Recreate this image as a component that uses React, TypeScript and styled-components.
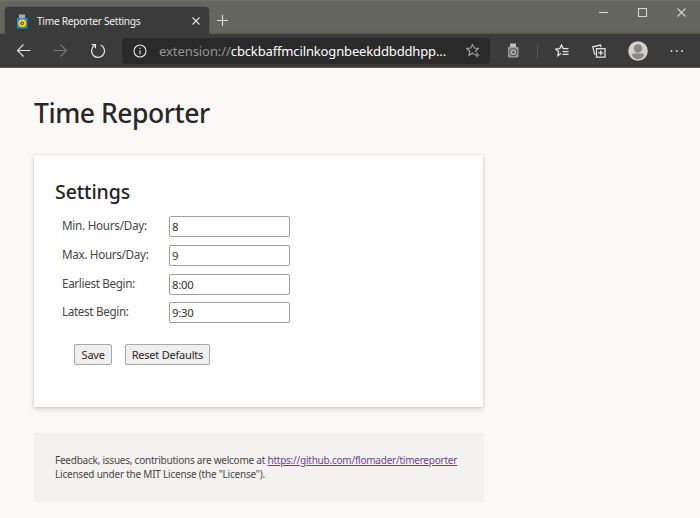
import React, { useState } from "react";
import styled, { createGlobalStyle } from "styled-components";

const GlobalStyle = createGlobalStyle`
  * { box-sizing: border-box; }
  html, body { margin: 0; background: #faf9f8; }
  body { font-family: "Noto Sans", "Open Sans", sans-serif; color: #323130; overflow: hidden; }
`;

const Window = styled.div`
  width: 700px;
  height: 518px;
  display: flex;
  flex-direction: column;
  background: #faf9f8;
  overflow: hidden;
`;

const TitleBar = styled.header`
  height: 34px;
  flex: none;
  display: flex;
  align-items: flex-start;
  padding-left: 5px;
  background: linear-gradient(#73746c 0, #65665f 2px, #65665f 31px, #575852 34px);
`;

const Tab = styled.div`
  width: 203.5px;
  height: 27px;
  margin-top: 7px;
  padding: 1px 8px 0 11px;
  display: flex;
  align-items: center;
  border-radius: 4px 4px 0 0;
  background: #3b3b3b;
  box-shadow: 0 0 2px #44443f;
`;

const TabTitle = styled.span`
  flex: 1;
  margin-left: 9px;
  font-size: 10.2px;
  line-height: 14px;
  letter-spacing: -0.3px;
  white-space: nowrap;
  color: #f0f0f0;
`;

const Icon = styled.svg<{ $w: number; $h?: number; $color?: string }>`
  display: block;
  flex: none;
  width: ${(p) => p.$w}px;
  height: ${(p) => p.$h ?? p.$w}px;
  color: ${(p) => p.$color ?? "#e4e4e4"};
  fill: none;
  stroke: currentColor;
  stroke-width: 1.1;
`;

const NewTab = styled.div`
  margin: 14px 0 0 7.5px;
`;

const WindowControls = styled.div`
  margin-left: auto;
  padding: 7px 13px 0 0;
  display: flex;
  gap: 28px;
`;

const Toolbar = styled.nav`
  height: 34px;
  flex: none;
  display: flex;
  align-items: center;
  padding: 0 15px 0 16px;
  background: #3b3b3b;
  border-bottom: 1px solid #5b5b5b;
`;

const NavButtons = styled.div`
  width: 106px;
  display: flex;
  align-items: center;
  gap: 22px;
`;

const AddressBar = styled.div`
  width: 368px;
  height: 26px;
  padding: 0 10px 0 11px;
  display: flex;
  align-items: center;
  border-radius: 4px;
  background: #2a2a2a;
`;

const Url = styled.span`
  flex: 1;
  margin-left: 12px;
  padding-top: 1px;
  font-size: 13px;
  line-height: 18px;
  letter-spacing: -0.14px;
  white-space: nowrap;
  color: #fff;
`;

const Scheme = styled.span`
  letter-spacing: -0.07px;
  color: #969696;
`;

const Actions = styled.div`
  flex: 1;
  display: grid;
  grid-template-columns: 30px 18px 37px 35.5px 42.5px 14px;
  align-items: center;
  padding-left: 17px;
`;

const Divider = styled.i`
  width: 1px;
  height: 14px;
  background: #555;
`;

const Page = styled.main`
  padding: 26px 34px 0;
`;

const PageTitle = styled.h1`
  margin: 0;
  height: 61px;
  font-size: 26.5px;
  font-weight: 500;
  line-height: 38px;
  letter-spacing: -0.45px;
  white-space: nowrap;
  color: #292827;
`;

const Card = styled.section`
  width: 449px;
  height: 252px;
  padding: 22px 21px 0;
  background: #fff;
  box-shadow: 0 2px 5px rgba(0, 0, 0, 0.17), 0 0 2px rgba(0, 0, 0, 0.1);
`;

const CardTitle = styled.h2`
  margin: 0;
  height: 39px;
  padding-top: 1px;
  font-size: 19.5px;
  font-weight: 500;
  line-height: 28px;
  letter-spacing: -0.1px;
  white-space: nowrap;
  color: #252423;
`;

const Field = styled.label`
  height: 28.8px;
  padding-left: 7px;
  display: grid;
  grid-template-columns: 107px 122px;
  align-items: start;
`;

const Label = styled.span<{ $spacing: number }>`
  font-size: 11.7px;
  line-height: 18px;
  letter-spacing: ${(p) => p.$spacing}px;
  white-space: nowrap;
  color: #484644;
`;

const Input = styled.input`
  width: 121px;
  height: 21px;
  padding: 1px 2px;
  border: 1px solid #a0a0a0;
  border-radius: 2px;
  background: #fff;
  outline: none;
  font: 11.3px/16px "Noto Sans", sans-serif;
  letter-spacing: -0.25px;
  color: #323130;
`;

const Buttons = styled.div`
  display: flex;
  gap: 13px;
  margin: 13px 0 0 19.4px;
`;

const Button = styled.button<{ $width: number }>`
  width: ${(p) => p.$width}px;
  height: 21px;
  padding: 1px 0 0;
  border: 1px solid #a8a8a8;
  border-radius: 2px;
  background: #efefef;
  font: 11px/16px "Noto Sans", sans-serif;
  letter-spacing: -0.22px;
  white-space: nowrap;
  color: #292827;
`;

const Footer = styled.footer`
  width: 449.5px;
  height: 69px;
  margin-top: 26px;
  padding: 21px 21px 0;
  background: #f3f2f1;
  font-size: 10px;
  line-height: 13.6px;
  white-space: nowrap;
  color: #484644;
`;

const FooterLine = styled.p<{ $spacing: number }>`
  margin: 0;
  letter-spacing: ${(p) => p.$spacing}px;
`;

const Link = styled.a`
  color: #703d96;
  text-decoration: underline;
`;

const Watch = ({ color }: { color?: boolean }) => (
  <Icon $w={12} $h={15} viewBox="0 0 12 15" stroke="none">
    <g stroke="none">
      <rect x="3" y="0.5" width="6" height="5" fill={color ? "#a9a9a7" : "#bdbdbd"} />
      <rect x="1" y="4" width="10.5" height="10.5" rx="1" fill={color ? "#2688d8" : "#999"} />
      <circle cx="6.2" cy="9.2" r="3.9" fill={color ? "#f6cf20" : "#555"} />
      <circle cx="6.2" cy="9.2" r={color ? 1.8 : 2.9} fill={color ? "#57501d" : "#aaa"} />
      <circle cx="6.4" cy="9.2" r={color ? 0.8 : 1.2} fill={color ? "#f6cf20" : "#555"} />
    </g>
  </Icon>
);

const initialFields = [
  { label: "Min. Hours/Day:", value: "8", spacing: -0.27 },
  { label: "Max. Hours/Day:", value: "9", spacing: -0.33 },
  { label: "Earliest Begin:", value: "8:00", spacing: -0.35 },
  { label: "Latest Begin:", value: "9:30", spacing: -0.35 },
];

export default function App() {
  const [values, setValues] = useState(initialFields.map((f) => f.value));
  const update = (index: number, value: string) =>
    setValues((current) => current.map((v, i) => (i === index ? value : v)));

  return (
    <Window>
      <GlobalStyle />
      <TitleBar>
        <Tab>
          <Watch color />
          <TabTitle>Time Reporter Settings</TabTitle>
          <Icon $w={10} viewBox="0 0 10 10"><path d="M1.5 1.5l7 7M8.5 1.5l-7 7" /></Icon>
        </Tab>
        <NewTab>
          <Icon $w={13} viewBox="0 0 13 13"><path d="M6.5 1v11M1 6.5h11" /></Icon>
        </NewTab>
        <WindowControls>
          <Icon $w={11} viewBox="0 0 11 11" $color="#d3d3cf"><path d="M1 5.5h9" /></Icon>
          <Icon $w={11} viewBox="0 0 11 11" $color="#d3d3cf"><path d="M1.5 1.5h8v8h-8z" /></Icon>
          <Icon $w={11} viewBox="0 0 11 11" $color="#d3d3cf"><path d="M1.5 1.5l8 8M9.5 1.5l-8 8" /></Icon>
        </WindowControls>
      </TitleBar>

      <Toolbar>
        <NavButtons>
          <Icon $w={15} viewBox="0 0 15 15"><path d="M14.5 7.5H1.5M7.5 1.5l-6 6 6 6" /></Icon>
          <Icon $w={15} viewBox="0 0 15 15" $color="#777"><path d="M.5 7.5h13M7.5 1.5l6 6-6 6" /></Icon>
          <Icon $w={16} viewBox="0 0 16 16"><path d="M10.6 2a6.5 6.5 0 1 1-6.1.5M1.7 1.6h3.7v3.7" strokeWidth="1.25" /></Icon>
        </NavButtons>
        <AddressBar>
          <Icon $w={14} viewBox="0 0 14 14"><circle cx="7" cy="7" r="6" /><path d="M7 6.2v4M7 3.8v1.3" /></Icon>
          <Url><Scheme>extension://</Scheme>cbckbaffmcilnkognbeekddbddhpp...</Url>
          <Icon $w={14} viewBox="0 0 14 14" $color="#a5a5a5">
            <path d="M8.5 10.4l-2-1.2-3.6 2.1.8-4-3-2.8 4-.4L6.5.6l1.8 3.5 4 .4-2.8 2.8.2.9M11 8.5v5M8.5 11h5" />
          </Icon>
        </AddressBar>
        <Actions>
          <Watch />
          <Divider />
          <Icon $w={14} viewBox="0 0 14 14">
            <path d="M6 9.6l-3.2 2.1.8-4-2.8-2.6 4-.5L6.5 1l1.7 3.6h5.3M7.5 7.5h6M7.5 10.3h6" strokeWidth="1.25" />
          </Icon>
          <Icon $w={14} viewBox="0 0 14 14">
            <path d="M4.5 4.5h8.5v8.5h-8.5zM8.8 6.2v5M6.2 8.8h5M3.5 10.5l-1-.4L.8 2.8l7.7-1.7.5 2" strokeWidth="1.25" />
          </Icon>
          <Icon $w={20} viewBox="0 0 20 20">
            <g stroke="none">
              <circle cx="10" cy="10" r="9.8" fill="#d2d0ce" />
              <circle cx="10" cy="7.5" r="4.2" fill="#8a8886" />
              <path d="M4 14.2c0-1.1 1-1.7 2-1.7h8c1 0 2 .6 2 1.7-.8 2.2-3.2 4-6 4s-5.2-1.8-6-4z" fill="#8a8886" />
            </g>
          </Icon>
          <Icon $w={14} $h={4} viewBox="0 0 14 4">
            <g fill="currentColor" stroke="none">
              <circle cx="1.5" cy="2" r=".9" /><circle cx="6.8" cy="2" r=".9" /><circle cx="12.1" cy="2" r=".9" />
            </g>
          </Icon>
        </Actions>
      </Toolbar>

      <Page>
        <PageTitle>Time Reporter</PageTitle>
        <Card>
          <CardTitle>Settings</CardTitle>
          {initialFields.map((field, i) => (
            <Field key={field.label}>
              <Label $spacing={field.spacing}>{field.label}</Label>
              <Input value={values[i]} onChange={(e) => update(i, e.target.value)} />
            </Field>
          ))}
          <Buttons>
            <Button $width={37.5}>Save</Button>
            <Button $width={85} onClick={() => setValues(initialFields.map((f) => f.value))}>Reset Defaults</Button>
          </Buttons>
        </Card>
        <Footer>
          <FooterLine $spacing={-0.235}>
            Feedback, issues, contributions are welcome at{" "}
            <Link href="https://github.com/flomader/timereporter">https://github.com/flomader/timereporter</Link>
          </FooterLine>
          <FooterLine $spacing={-0.22}>Licensed under the MIT License (the "License").</FooterLine>
        </Footer>
      </Page>
    </Window>
  );
}
